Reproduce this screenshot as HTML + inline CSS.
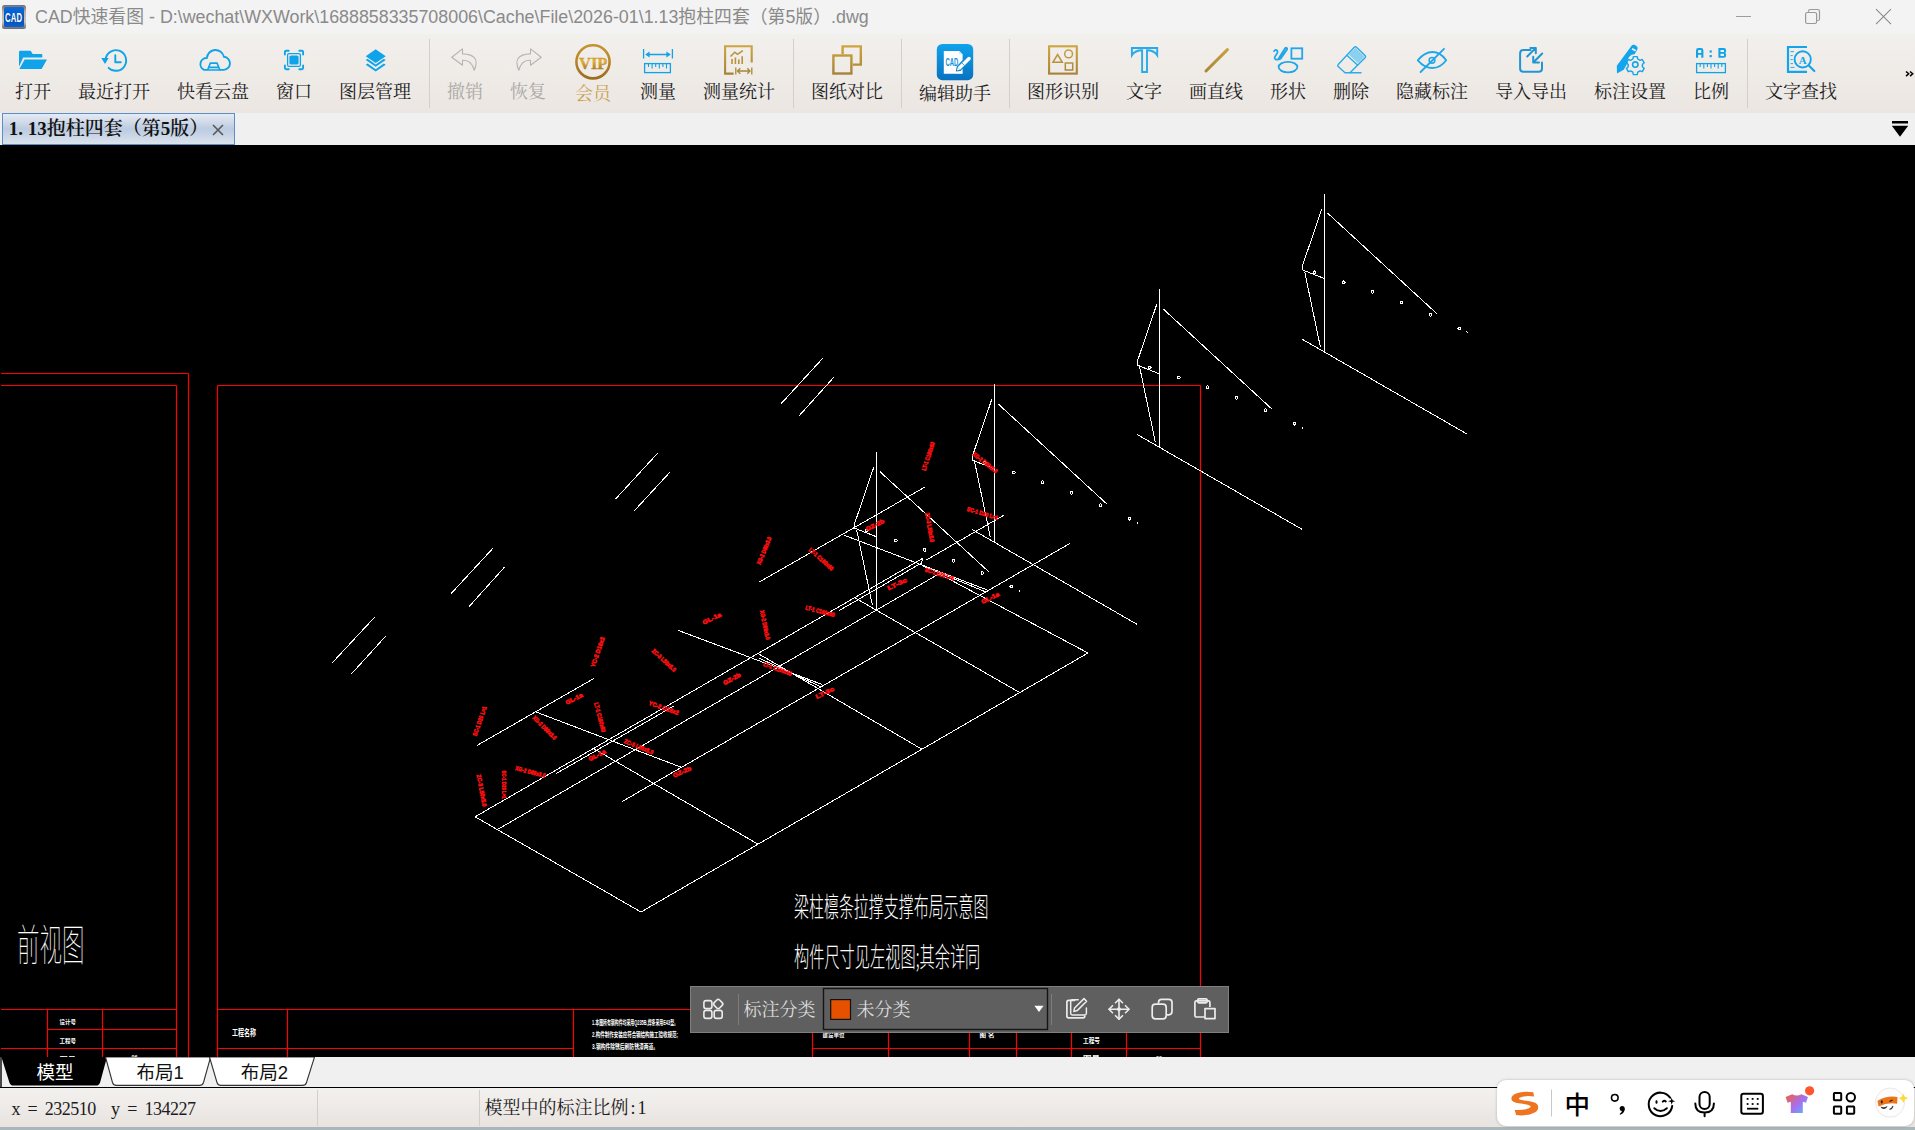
<!DOCTYPE html>
<html lang="zh-CN">
<head>
<meta charset="utf-8">
<title>CAD快速看图</title>
<style>
*{box-sizing:border-box;margin:0;padding:0}
html,body{width:1915px;height:1130px;overflow:hidden;background:#000}
body{position:relative;font-family:"Liberation Sans","Noto Sans CJK SC",sans-serif}
.abs{position:absolute}
#title{left:0;top:0;width:1915px;height:34px;background:#f3f3f3}
#title .txt{left:35px;top:1.200px;height:33px;line-height:33px;font-size:17.850px;color:#8a8a8a;white-space:nowrap;letter-spacing:0}
#appicon{left:2px;top:5px;width:24px;height:24px;border-radius:2.500px;background:linear-gradient(#6f6f6f,#b9b4ae 30%,#c9c4be 70%,#6b6865);}
#appicon:before{content:"";position:absolute;left:2px;top:1.600px;right:2px;bottom:1.800px;border-radius:1.500px;background:linear-gradient(#0a6ce0,#0650b4 60%,#0a5fd0)}
#appicon span{position:absolute;left:3.400px;top:6.500px;font:700 12.500px/12px "Liberation Sans",sans-serif;color:#fff;transform:scaleX(.62);transform-origin:0 0;letter-spacing:.3px}
#toolbar{left:0;top:34px;width:1915px;height:79px;background:linear-gradient(#f2f0ed,#efebe7 50%,#ebe6e2)}
.lb{position:absolute;transform:translateX(-50%);top:46px;font-family:"Liberation Serif","Noto Serif CJK SC",serif;font-size:18px;line-height:24px;color:#1c1c1c;font-weight:400;white-space:nowrap}
.lb.low{top:48px}
.lb.gray{color:#aaa8a6}
.lb.gold{color:#c9a050}
.sep{position:absolute;top:5px;width:1px;height:68px;background:#d8d4d0}
#tabs{left:0;top:113px;width:1915px;height:32px;background:#f0f0f0}
#doc-tab{left:2px;top:0;width:233px;height:32px;border:1px solid #5b8fc7;background:linear-gradient(#e6ebf4,#bccbe0 50%,#dbe3ee)}
#doc-tab .t{left:5.800px;top:3px;font-family:"Liberation Serif","Noto Serif CJK SC",serif;font-weight:600;font-size:19px;line-height:24px;color:#111;white-space:nowrap}
#canvas{left:0;top:145px;width:1915px;height:912px;background:#000;overflow:hidden}
#ltabs{left:0;top:1057px;width:1915px;height:31px;background:#f0f0f0;border-bottom:1.400px solid #000}
#status{left:0;top:1088px;width:1915px;height:39px;background:linear-gradient(#f3f1ef,#e8e3df)}
#status .s{font-family:"Liberation Serif","Noto Serif CJK SC",serif;color:#1c1c1c;line-height:24px;white-space:nowrap}
.cadt{position:absolute;transform-origin:0 0;white-space:nowrap;color:#fff;font-family:"Noto Sans CJK SC",sans-serif;font-weight:300;line-height:1}
#ftb{left:690px;top:841px;width:539px;height:47px;background:#5f5f5f;border:1px solid #808080}
#ftb svg{left:-1px !important;top:-1px !important}
.ft{font-family:"Liberation Serif","Noto Serif CJK SC",serif;font-size:18px;line-height:24px;color:#dcdcdc;white-space:nowrap}
.lt{top:4px;font-size:18.500px;line-height:24px;color:#111;white-space:nowrap;font-family:"Liberation Sans","Noto Sans CJK SC",sans-serif}
#ime{left:1496.500px;top:1080px;width:417.500px;height:46px;background:#fff;border-radius:9px;box-shadow:0 0 3px rgba(0,0,0,.25)}
#botstrip{left:0;top:1127px;width:1915px;height:3px;background:#a9b7bd}
</style>
</head>
<body>
<div id="title" class="abs">
  <div class="abs" id="appicon"><span>CAD</span></div>
  <div class="txt abs">CAD快速看图 - D:\wechat\WXWork\1688858335708006\Cache\File\2026-01\1.13抱柱四套（第5版）.dwg</div>
  <svg class="abs" style="left:1720px;top:0" width="195" height="33" viewBox="1720 0 195 33" fill="none">
  <path d="M1736 16.500H1751" stroke="#9c9c9c" stroke-width="1"/>
  <path d="M1808.500 11.800V11.300q0-1.800 1.800-1.800H1817.700q1.800 0 1.800 1.800V18.700q0 1.800-1.800 1.800H1817.300" stroke="#999" stroke-width="1.200"/>
  <rect x="1805.600" y="12.500" width="11" height="11" rx="1.800" stroke="#999" stroke-width="1.200"/>
  <path d="M1876 9.200L1891 24.200M1891 9.200L1876 24.200" stroke="#8a8a8a" stroke-width="1.100"/>
  </svg>
</div>
<div id="toolbar" class="abs">
<svg class="abs" style="left:0;top:-34px" width="1915" height="113" viewBox="0 0 1915 113" fill="none">
<defs>
<linearGradient id="gold" x1="0" y1="45" x2="0" y2="75" gradientUnits="userSpaceOnUse"><stop offset="0" stop-color="#cfa63f"/><stop offset="1" stop-color="#a5813a"/></linearGradient>
<linearGradient id="vipg" x1="0" y1="44" x2="0" y2="80" gradientUnits="userSpaceOnUse"><stop offset="0" stop-color="#c4942f"/><stop offset=".5" stop-color="#b5852a"/><stop offset="1" stop-color="#9a6a1e"/></linearGradient>
<linearGradient id="vipt" x1="0" y1="52" x2="0" y2="72" gradientUnits="userSpaceOnUse"><stop offset="0" stop-color="#a8741a"/><stop offset=".45" stop-color="#e0b13c"/><stop offset="1" stop-color="#9a6a1e"/></linearGradient>
<linearGradient id="edg" x1="0" y1="44" x2="0" y2="80" gradientUnits="userSpaceOnUse"><stop offset="0" stop-color="#10a3ea"/><stop offset="1" stop-color="#0872c2"/></linearGradient>
<pattern id="dots" width="1.6" height="1.6" patternUnits="userSpaceOnUse" patternTransform="rotate(45)"><rect width="1.600" height="1.600" fill="#5dbdec"/><rect x=".3" y=".3" width=".9" height=".9" fill="#eef6fb"/></pattern>
</defs>
<!-- separators -->
<g stroke="#d3cfcc" stroke-width="1">
<path d="M429.5 39V108M793.5 39V108M901.5 39V108M1009.5 39V108M1747.5 39V108"/>
</g>
<!-- open -->
<g fill="#0fa4ea">
<path d="M19 52q0-1.3 1.3-1.3h10.4l2 3.3h8.6q1 0 1 1v2.6H23.2L19 66.8z"/>
<path d="M24.6 59.4H47L41.6 69H19.4z"/>
</g>
<!-- recent -->
<g stroke="#0fa4ea" stroke-width="1.9" stroke-linecap="round">
<path d="M105.6 59.5A10.3 10.3 0 1 1 108.6 67.8"/>
<path d="M115.3 55.3V62.2H120.8" stroke-linejoin="round"/>
</g>
<path d="M101.3 58h7.4l-3.7 6z" fill="#0fa4ea"/>
<!-- cloud -->
<g stroke="#0fa4ea" stroke-width="1.9" stroke-linecap="round" stroke-linejoin="round">
<path d="M206.6 69.9H204.2A6.2 6.2 0 0 1 206.9 58A8.600 8.600 0 0 1 223.900 56.800A6.500 6.500 0 0 1 222.900 69.900H220.700"/>
<path d="M207.600 70l2.700-6.900h6.800l2.700 6.900zM208.600 67.400h10.400" stroke-width="1.600"/>
</g>
<!-- window -->
<g stroke="#0fa4ea" stroke-width="1.9" stroke-linecap="round" stroke-linejoin="round">
<path d="M284.9 54.5V52q0-1.2 1.2-1.2h2.6M299.3 50.8h2.6q1.2 0 1.2 1.2v2.5M303.1 65.5V68q0 1.2-1.2 1.2h-2.6M288.7 69.2h-2.6q-1.2 0-1.2-1.2v-2.5"/>
<rect x="287.6" y="53.6" width="12.8" height="12.8" rx="1.5" stroke-width="1.3"/>
</g>
<rect x="289.4" y="55.4" width="9.2" height="9.2" rx="1.6" fill="#0fa4ea"/>
<!-- layers -->
<g fill="#0fa4ea">
<path d="M375.700 49.300l10 6.900l-10 6.900l-10-6.900z"/>
<path d="M365.700 59.900L367.600 58.800L375.700 64.400L383.800 58.800L385.700 59.900L375.700 66.800Z"/>
<path d="M365.700 64.700L367.600 63.600L375.700 69.200L383.800 63.600L385.700 64.700L375.700 71.600Z"/>
</g>
<!-- undo / redo -->
<g stroke="#b4b4b4" stroke-width="1.1" stroke-linejoin="round">
<path d="M462.5 48.9L451.8 57.3L462.5 65.2V60.3Q471.5 59.6 474.2 70.3Q481.3 54.4 462.5 53.9Z"/>
<path d="M530.5 48.9L541.2 57.3L530.5 65.2V60.3Q521.5 59.6 518.8 70.3Q511.7 54.4 530.5 53.9Z"/>
</g>
<!-- vip -->
<circle cx="593" cy="61.8" r="16.6" stroke="url(#vipg)" stroke-width="2.6"/>
<text x="593.200" y="69.300" text-anchor="middle" font-family="'Liberation Serif',serif" font-weight="700" font-size="17" fill="url(#vipt)" stroke="url(#vipt)" stroke-width=".4" textLength="28.500" lengthAdjust="spacingAndGlyphs">VIP</text>
<!-- measure -->
<g stroke="#0fa4ea" stroke-width="1.3">
<path d="M643.6 49V58.6M672.4 49V58.6M647 54.5H669"/>
<rect x="644.6" y="63.6" width="25.8" height="9" />
<path d="M648.5 64V67M652.1 64V68.4M655.7 64V67M659.3 64V68.4M662.9 64V67M666.5 64V68.4" stroke-width="1.1"/>
</g>
<path d="M645.2 54.5l4.4-3v6zM670.8 54.5l-4.4-3v6z" fill="#0fa4ea"/>
<!-- measure stats -->
<g stroke="url(#gold)" stroke-width="2.1">
<path d="M733.6 73.6H725.1V46.3H751.7V62.5"/>
</g>
<g stroke="#b89238" stroke-width="1.4">
<path d="M732 64V59M735.4 64V57.5M738.8 64V59.5M742.2 64V56.2" stroke-width="1.6"/>
<path d="M730.5 56.5L734.8 52.2L737.5 54.4L742.8 50.6" stroke-width="1.5"/>
<path d="M735.8 67.5V74.6M751.8 67.5V74.6M737.5 71H750M740.3 68.2L737.5 71L740.3 73.8M747.3 68.2L750 71L747.3 73.8" stroke-width="1.3" stroke="#a98738"/>
</g>
<!-- compare -->
<g stroke="url(#gold)" stroke-width="2.4">
<path d="M842.6 54.3V46.4H860.8V64.6H852.8"/>
<rect x="833.4" y="55.5" width="18" height="18"/>
</g>
<!-- edit assistant -->
<rect x="936.8" y="44" width="36.4" height="36.2" rx="5.5" fill="url(#edg)"/>
<path d="M943.8 51H959.3L962.6 54.3V60L956.7 66.6L955.8 71.6L960.6 70.9L962.6 68.8V73.7H943.8Z" fill="#fff"/>
<path d="M959.3 51v3.3h3.3z" fill="#bfe3f7"/>
<text x="951.800" y="66.200" text-anchor="middle" font-family="'Liberation Sans',sans-serif" font-weight="700" font-size="10" fill="#1290dd" textLength="12.800" lengthAdjust="spacingAndGlyphs">CAD</text>
<path d="M957.7 67.3L967.8 57.3a1.7 1.7 0 0 1 2.5 2.5L960.2 69.8Z" fill="#fff"/>
<path d="M956.9 70.6l.9-3.1l2.2 2.2z" fill="#fff"/>
<path d="M955.8 72.8h6.5" stroke="#fff" stroke-width="1"/>
<path d="M962 63l2.5 2.5" stroke="#2aa0e4" stroke-width=".9"/>
<!-- shape recog -->
<g stroke="url(#gold)">
<rect x="1049.1" y="46.3" width="27.7" height="27.3" stroke-width="2.1"/>
<circle cx="1068.6" cy="53.9" r="3.9" stroke-width="1.5"/>
<path d="M1057.6 54.5L1062.3 62.3H1052.9Z" stroke-width="1.5"/>
<rect x="1065.3" y="63" width="7.4" height="7" stroke-width="1.5"/>
</g>
<!-- text T -->
<path d="M1131.900 48H1157.200V55.300Q1154 50.300 1147 50.300V72H1142.100V50.300Q1135.100 50.300 1131.900 55.300Z" stroke="#29abe9" stroke-width="1.900"/>
<!-- line -->
<path d="M1206 71L1227.4 49.6" stroke="url(#gold)" stroke-width="3" stroke-linecap="round"/>
<!-- shapes -->
<g stroke="#1ea7ea" stroke-width="1.8">
<rect x="1291.4" y="48.3" width="10.8" height="10.4"/>
<ellipse cx="1288" cy="67.1" rx="9.4" ry="5.3"/>
<path d="M1274 51.2q1.8-2.4 3.3-.4q1 1.700-1.500 4.500q-2.400 3.400.200 4.300q1.700.4 3.500-1.300" stroke-width="1.700" stroke-linecap="round"/>
<path d="M1279.300 57.400L1278.700 59.400L1280.600 58.600L1287 49.400a1.100 1.100 0 0 0-1.700-1.300Z" stroke-width="1.900" stroke-linejoin="round"/>
</g>
<!-- eraser -->
<g stroke="#29abe9" stroke-width="1.4" stroke-linejoin="round">
<path d="M1354.300 47.300a1.500 1.500 0 0 1 2.200 0l8.600 8.200a1.500 1.500 0 0 1 0 2.200L1350 72.800H1345l-6.800-6.200a1.500 1.500 0 0 1 0-2.200Z"/>
<path d="M1346.600 55.100L1358 65.500M1350 72.800H1361.500"/>
</g>
<path d="M1355.400 47.800l9.200 8.800l-6.400 6.600l-9.500-8.800z" fill="url(#dots)"/>
<!-- eye slash -->
<g stroke="#1ea7ea" stroke-width="1.8" stroke-linecap="round">
<path d="M1417.800 60.300Q1424.500 52 1432.500 52Q1440.500 52 1446.200 60.300Q1440.500 68 1432.500 68Q1424.500 68 1417.800 60.300Z" stroke-linejoin="round"/>
<circle cx="1432" cy="60.300" r="2.900" stroke-width="1.500"/>
<path d="M1420.600 72L1444 48.800"/>
</g>
<!-- import export -->
<g stroke="#2196d4" stroke-width="2" stroke-linecap="round" stroke-linejoin="round">
<path d="M1530.500 50H1523.500q-3.400 0-3.400 3.400V68.400q0 3.400 3.400 3.400H1538.600q3.400 0 3.400-3.400V62.500"/>
<path d="M1527.200 56.500L1535.800 47.900M1530.400 47.900H1535.800V53.300" stroke-width="2"/>
<path d="M1542.200 53.500L1533.200 62.500M1533.200 56.700V62.500H1539" stroke-width="2"/>
</g>
<!-- mark settings -->
<g fill="#12a4ec">
<path d="M1631 46.400a3.300 3.300 0 0 1 4.800-1a3.300 3.300 0 0 1 1.200 4.600l-2.300 4.300q-3-.2-5.500 2.400q-2.400 2.800-1.500 6l-4 7l-6.700 3.800l-.2-7.800Zm1.600 1.500l-1 1.700l3.600 2l.9-1.700z" fill-rule="evenodd"/>
</g>
<g stroke="#12a4ec" fill="none">
<circle cx="1635.300" cy="64.600" r="2.700" stroke-width="1.600"/>
<path d="M1633.400 56.600h3.800l.6 2.400l2.200 1.300l2.300-.8l1.900 3.300l-1.800 1.700v2.200l1.800 1.700l-1.900 3.300l-2.300-.8l-2.200 1.300l-.6 2.400h-3.800l-.6-2.400l-2.200-1.300l-2.300.8l-1.900-3.300l1.800-1.700v-2.200l-1.800-1.700l1.900-3.300l2.300.8l2.200-1.300z" stroke-width="1.400" stroke-linejoin="round"/>
</g>
<!-- scale -->
<g fill="#0fa4ea">
<path d="M1696 57.800V50.400q0-2.400 2.400-2.400h2.600q2.400 0 2.400 2.400v7.400h-2.100v-3h-3.200v3zm2.100-4.900h3.200v-2.100q0-.8-.8-.8h-1.600q-.8 0-.8.800z"/>
<rect x="1709.600" y="50.400" width="2.200" height="2.200"/><rect x="1709.600" y="55" width="2.200" height="2.200"/>
<path d="M1718.400 48h5.400q2.300 0 2.300 2.300v1q0 1.300-1 1.600q1 .3 1 1.600v1q0 2.300-2.300 2.300h-5.400zm2.100 1.900v2.100h3q.6 0 .6-.6v-.9q0-.6-.6-.6zm0 3.900v2.100h3q.6 0 .6-.6v-.9q0-.6-.6-.6z"/>
</g>
<g stroke="#0fa4ea" stroke-width="1.300">
<rect x="1696.600" y="63.600" width="28.800" height="9"/>
<path d="M1700.200 64V67M1703.800 64V68.400M1707.400 64V67M1711 64V68.400M1714.600 64V67M1718.200 64V68.400M1721.800 64V67" stroke-width="1.100"/>
</g>
<!-- text find -->
<g stroke="#12a4ec" stroke-linecap="butt">
<path d="M1807 47H1788V71.800H1807" stroke-width="2.200"/>
<path d="M1790.500 51.600H1794M1790.500 55.600H1792.800M1790.500 59.600H1792.800M1790.500 63.600H1793M1790.500 67.400H1794.500" stroke-width=".9"/>
<circle cx="1802.700" cy="59.400" r="8.100" stroke-width="1.900"/>
<path d="M1808.800 65.500L1814.300 71" stroke-width="2.200" stroke-linecap="round"/>
</g>
<text x="1802.700" y="64.300" text-anchor="middle" font-family="'Liberation Serif',serif" font-weight="700" font-size="11" fill="#12a4ec">A</text>
<!-- chevrons -->
<path d="M1906 71.500l2.700 2.300l-2.700 2.300M1910 71.500l2.700 2.300l-2.700 2.300" stroke="#000" stroke-width="1.500" fill="none"/>
</svg>
<div class="lb " style="left:33px">打开</div>
<div class="lb " style="left:114px">最近打开</div>
<div class="lb " style="left:213px">快看云盘</div>
<div class="lb " style="left:294px">窗口</div>
<div class="lb " style="left:375px">图层管理</div>
<div class="lb gray" style="left:465px">撤销</div>
<div class="lb gray" style="left:528px">恢复</div>
<div class="lb gold low" style="left:593px">会员</div>
<div class="lb " style="left:658px">测量</div>
<div class="lb " style="left:739px">测量统计</div>
<div class="lb " style="left:847px">图纸对比</div>
<div class="lb low" style="left:955px">编辑助手</div>
<div class="lb " style="left:1063px">图形识别</div>
<div class="lb " style="left:1144px">文字</div>
<div class="lb " style="left:1216px">画直线</div>
<div class="lb " style="left:1288px">形状</div>
<div class="lb " style="left:1351px">删除</div>
<div class="lb " style="left:1432px">隐藏标注</div>
<div class="lb " style="left:1531px">导入导出</div>
<div class="lb " style="left:1630px">标注设置</div>
<div class="lb " style="left:1711px">比例</div>
<div class="lb " style="left:1801px">文字查找</div>

</div>
<div id="tabs" class="abs">
  <svg class="abs" style="left:1888px;top:6px" width="24" height="20" viewBox="1888 119 24 20"><path d="M1892 121H1908V123.400H1892ZM1891.800 125.800H1908.200L1900 136.800Z" fill="#000"/></svg>
  <div id="doc-tab" class="abs"><div class="t abs" id="dtt">1<span style="display:inline-block;width:9.5px">.</span>13抱柱四套（第5版）</div><svg class="abs" style="left:209.300px;top:9.800px" width="12" height="12" viewBox="0 0 12 12"><path d="M1 1L11 11M11 1L1 11" stroke="#555" stroke-width="1.5"/></svg></div>
</div>
<div id="canvas" class="abs">
<svg class="abs" style="left:0;top:-145px" width="1915" height="1202" viewBox="0 0 1915 1202" fill="none" shape-rendering="auto">
<path stroke="#ff0000" stroke-width="1.2" d="M1 373.5L188.5 373.5M188.5 373.5L188.5 1057M1 385.5L176.5 385.5M176.5 385.5L176.5 1057M1 1009.5L176.5 1009.5M47.5 1029.5L176.5 1029.5M1 1048.5L176.5 1048.5M47.5 1009.5L47.5 1057M102.5 1009.5L102.5 1057M217.5 385.5L1200.5 385.5M217.5 385.5L217.5 1057M1200.5 385.5L1200.5 1057M217.5 1009.5L1200.5 1009.5M287.5 1009.5L287.5 1057M573.5 1009.5L573.5 1057M217.5 1048.5L573.5 1048.5M812.5 1048.5L1200.5 1048.5M812.5 1009.5L812.5 1057M888.5 1009.5L888.5 1057M969.5 1009.5L969.5 1057M1016.5 1009.5L1016.5 1057M1071.5 1009.5L1071.5 1057M1126.5 1009.5L1126.5 1057"/>
<path stroke="#fff" stroke-width="1" shape-rendering="crispEdges" d="M475.1 816.8L923.0 558.2M926.4 560.0L1004.0 515.1M921.5 563.0L923.0 558.2M498.5 828.9L939.1 573.8M621.8 801.7L1070.0 543.4M641.0 912.0L1088.0 653.0M475.1 816.8L641.0 912.0M593.6 748.5L757.5 843.9M758.7 653.9L922.0 749.3M939.1 573.8L1088.0 653.0M556.0 773.6L673.5 706.2M838.9 610.7L921.5 563.0M477.2 745.3L593.9 678.5M535.7 711.9L681.4 767.3M678.3 630.4L821.9 684.4M759.5 658.3L820.5 686.6M843.6 535.0L986.7 589.8M922.5 565.8L986.0 592.0M759.1 582.1L924.7 487.2M332.2 662.8L374.9 616.9M351.3 674.1L385.9 635.9M450.9 593.8L493.0 548.2M469.0 606.7L504.7 566.9M615.8 498.8L657.9 452.9M634.0 511.1L669.9 472.2M781.0 403.8L822.9 358.1M798.9 416.0L834.0 377.1M1324.5 194.0L1324.5 351.3M1321.8 209.0L1302.2 266.5M1302.2 266.5L1302.2 269.8M1302.2 269.8L1324.5 278.6M1304.7 271.9L1320.4 347.1M1327.7 213.2L1437.3 314.1M1302.2 339.2L1467.0 434.0M1159.5 289.3L1159.5 446.6M1156.8 304.3L1137.2 361.8M1137.2 361.8L1137.2 365.1M1137.2 365.1L1159.5 373.9M1139.7 367.2L1155.4 442.4M1162.7 308.5L1272.3 409.4M1137.2 434.5L1302.0 529.3M994.5 384.3L994.5 541.6M991.8 399.3L972.2 456.8M972.2 456.8L972.2 460.1M972.2 460.1L994.5 468.9M974.7 462.2L990.4 537.4M997.7 403.5L1107.3 504.4M972.2 529.5L1137.0 624.3M876.5 452.2L876.5 609.5M873.8 467.2L854.2 524.7M854.2 524.7L854.2 528.0M854.2 528.0L876.5 536.8M856.7 530.1L872.4 605.3M879.7 471.4L989.3 572.3M854.2 597.4L1019.0 692.2"/>
<g stroke="#fff" stroke-width="1.1" shape-rendering="crispEdges"><circle cx="1314.7" cy="272.3" r="1.3"/><circle cx="1343.8" cy="282.2" r="1.3"/><circle cx="1372.6" cy="291.8" r="1.3"/><circle cx="1401.4" cy="302.6" r="1.3"/><circle cx="1430.4" cy="314.8" r="1.3"/><circle cx="1459.3" cy="328.5" r="1.3"/><circle cx="1149.7" cy="367.6" r="1.3"/><circle cx="1178.8" cy="377.5" r="1.3"/><circle cx="1207.6" cy="387.1" r="1.3"/><circle cx="1236.4" cy="397.9" r="1.3"/><circle cx="1265.4" cy="410.1" r="1.3"/><circle cx="1294.3" cy="423.8" r="1.3"/><circle cx="984.7" cy="462.6" r="1.3"/><circle cx="1013.8" cy="472.5" r="1.3"/><circle cx="1042.6" cy="482.1" r="1.3"/><circle cx="1071.4" cy="492.9" r="1.3"/><circle cx="1100.4" cy="505.1" r="1.3"/><circle cx="1129.3" cy="518.8" r="1.3"/><circle cx="866.7" cy="530.5" r="1.3"/><circle cx="895.8" cy="540.4" r="1.3"/><circle cx="924.6" cy="550.0" r="1.3"/><circle cx="953.4" cy="560.8" r="1.3"/><circle cx="982.4" cy="573.0" r="1.3"/><circle cx="1011.3" cy="586.7" r="1.3"/></g>
<path stroke="#fff" stroke-width="1" shape-rendering="crispEdges" d="M1466.7 331.3l1 2M1301.7 426.6l1 2M1136.7 521.6l1 2M1018.7 589.5l1 2"/>
<g fill="#ff1010" font-family="'Liberation Sans',sans-serif" font-weight="700" font-size="6" stroke="#ff1010" stroke-width=".55">
<text transform="translate(923.5 470.3) rotate(-71.7)" y="2.1" textLength="29.7" lengthAdjust="spacingAndGlyphs">LT-1 C160x60</text>
<text transform="translate(973.3 453.4) rotate(38.1)" y="2.1" textLength="30.0" lengthAdjust="spacingAndGlyphs">XG-2 D89x3.0</text>
<text transform="translate(967.1 508.8) rotate(16.8)" y="2.1" textLength="32.2" lengthAdjust="spacingAndGlyphs">SC-1 D20 L=1</text>
<text transform="translate(927.1 512.9) rotate(80.1)" y="2.1" textLength="29.7" lengthAdjust="spacingAndGlyphs">ZC-3 L50x5.0</text>
<text transform="translate(866.0 529.4) rotate(-26.1)" y="2.1" textLength="20.0" lengthAdjust="spacingAndGlyphs">GZ-2b</text>
<text transform="translate(809.6 548.9) rotate(41.6)" y="2.1" textLength="30.9" lengthAdjust="spacingAndGlyphs">LT-1 C160x60</text>
<text transform="translate(758.3 564.2) rotate(-67.4)" y="2.1" textLength="29.5" lengthAdjust="spacingAndGlyphs">XG-2 D89x3.0</text>
<text transform="translate(925.1 569.4) rotate(17.5)" y="2.1" textLength="30.6" lengthAdjust="spacingAndGlyphs">SC-1 D20 L=1</text>
<text transform="translate(887.6 588.4) rotate(-24.9)" y="2.1" textLength="20.9" lengthAdjust="spacingAndGlyphs">LT-3c</text>
<text transform="translate(981.5 602.2) rotate(-26.4)" y="2.1" textLength="19.5" lengthAdjust="spacingAndGlyphs">GL-1a</text>
<text transform="translate(805.5 607.4) rotate(14.8)" y="2.1" textLength="30.2" lengthAdjust="spacingAndGlyphs">LT-1 C160x60</text>
<text transform="translate(761.9 610.4) rotate(78.2)" y="2.1" textLength="29.9" lengthAdjust="spacingAndGlyphs">XG-2 D89x3.0</text>
<text transform="translate(702.9 622.8) rotate(-26.2)" y="2.1" textLength="19.9" lengthAdjust="spacingAndGlyphs">GL-1a</text>
<text transform="translate(652.6 650.0) rotate(42.3)" y="2.1" textLength="30.4" lengthAdjust="spacingAndGlyphs">ZC-3 L50x5.0</text>
<text transform="translate(592.5 666.9) rotate(-70.9)" y="2.1" textLength="31.5" lengthAdjust="spacingAndGlyphs">YC-2 D16x2</text>
<text transform="translate(763.4 663.8) rotate(20.1)" y="2.1" textLength="30.0" lengthAdjust="spacingAndGlyphs">LT-1 C160x60</text>
<text transform="translate(723.4 683.3) rotate(-28.6)" y="2.1" textLength="19.2" lengthAdjust="spacingAndGlyphs">GZ-2b</text>
<text transform="translate(815.8 697.2) rotate(-26.2)" y="2.1" textLength="19.9" lengthAdjust="spacingAndGlyphs">LT-3c</text>
<text transform="translate(565.8 702.8) rotate(-26.4)" y="2.1" textLength="18.4" lengthAdjust="spacingAndGlyphs">GL-1a</text>
<text transform="translate(649.0 702.8) rotate(19.1)" y="2.1" textLength="31.4" lengthAdjust="spacingAndGlyphs">YC-2 D16x2</text>
<text transform="translate(596.1 702.8) rotate(75.3)" y="2.1" textLength="30.3" lengthAdjust="spacingAndGlyphs">LT-1 C160x60</text>
<text transform="translate(533.5 716.7) rotate(44.9)" y="2.1" textLength="31.2" lengthAdjust="spacingAndGlyphs">XG-2 D89x3.0</text>
<text transform="translate(474.5 735.7) rotate(-70.8)" y="2.1" textLength="31.0" lengthAdjust="spacingAndGlyphs">SC-1 D20 L=1</text>
<text transform="translate(624.3 740.8) rotate(22.3)" y="2.1" textLength="31.1" lengthAdjust="spacingAndGlyphs">ZC-3 L50x5.0</text>
<text transform="translate(588.9 759.3) rotate(-26.6)" y="2.1" textLength="18.3" lengthAdjust="spacingAndGlyphs">GL-1a</text>
<text transform="translate(673.1 775.7) rotate(-23.3)" y="2.1" textLength="19.5" lengthAdjust="spacingAndGlyphs">GZ-2b</text>
<text transform="translate(515.5 768.0) rotate(14.5)" y="2.1" textLength="30.8" lengthAdjust="spacingAndGlyphs">XG-2 D89x3.0</text>
<text transform="translate(503.7 770.6) rotate(90.0)" y="2.1" textLength="28.2" lengthAdjust="spacingAndGlyphs">SC-1 D20 L=1</text>
<text transform="translate(478.6 774.7) rotate(79.1)" y="2.1" textLength="32.4" lengthAdjust="spacingAndGlyphs">ZC-3 L50x5.0</text>
</g>
<g fill="#fff" font-family="'Liberation Sans','Noto Sans CJK SC',sans-serif" font-weight="700">
<text x="59.5" y="1024" font-size="6" textLength="16.5" lengthAdjust="spacingAndGlyphs">设计号</text>
<text x="59.5" y="1043" font-size="6" textLength="16.5" lengthAdjust="spacingAndGlyphs">工程号</text>
<text x="59.5" y="1060.5" font-size="6" textLength="16.5" lengthAdjust="spacingAndGlyphs">图号</text>
<text x="131.5" y="1059.3" font-size="5" textLength="6" lengthAdjust="spacingAndGlyphs">06</text>
<text x="232" y="1036.3" font-size="9" textLength="24" lengthAdjust="spacingAndGlyphs">工程名称</text>
<text x="592" y="1025" font-size="6.5" textLength="86" lengthAdjust="spacingAndGlyphs">1.本图所有钢构件均采用Q235B,焊条采用E43型。</text>
<text x="592" y="1037.3" font-size="6.5" textLength="86" lengthAdjust="spacingAndGlyphs">2.构件制作安装应符合钢结构施工验收规范;</text>
<text x="592" y="1049" font-size="6.5" textLength="66" lengthAdjust="spacingAndGlyphs">3.钢构件除锈后刷防锈漆两道。</text>
<text x="1083" y="1042.8" font-size="6.5" textLength="17" lengthAdjust="spacingAndGlyphs">工程号</text>
<text x="1083" y="1060.8" font-size="6.5" textLength="17" lengthAdjust="spacingAndGlyphs">图号</text>
<text x="1156" y="1059.6" font-size="5" textLength="6" lengthAdjust="spacingAndGlyphs">06</text>
<text x="822.5" y="1037" font-size="5.5" textLength="22" lengthAdjust="spacingAndGlyphs">建设单位</text>
<text x="979.5" y="1037" font-size="5.5" textLength="15" lengthAdjust="spacingAndGlyphs">图 名</text>
</g>
</svg>
<div class="cadt" style="left:793.5px;top:746.5px;font-size:27.5px;transform:scaleX(.544)">梁柱檩条拉撑支撑布局示意图</div>
<div class="cadt" style="left:793.5px;top:797px;font-size:27.5px;transform:scaleX(.553)">构件尺寸见左视图;其余详同</div>
<div class="cadt" style="left:17px;top:775.800px;font-size:43px;font-weight:100;transform:scaleX(.523)">前视图</div>
<div id="ftb" class="abs">
<svg class="abs" style="left:0;top:0" width="539" height="47" viewBox="690 986 539 47" fill="none">
<g stroke="#ececec" stroke-width="1.6">
<rect x="703.9" y="1000.6" width="8" height="8" rx="2.2"/>
<rect x="703.9" y="1010.4" width="8" height="8" rx="2.2"/>
<rect x="714.2" y="1010.4" width="8" height="8" rx="2.2"/>
<rect x="714.4" y="1000.2" width="7.6" height="7.6" rx="2" transform="rotate(45 718.2 1004)"/>
</g>
<path d="M738.5 994V1025M1051.500 994V1025" stroke="#7d7d7d" stroke-width="1"/>
<rect x="823.500" y="988.500" width="224" height="41" fill="#5f5f5f" stroke="#151515" stroke-width="1.400"/>
<rect x="830.700" y="999.600" width="19.800" height="19.800" fill="#e65100" stroke="#111" stroke-width="1.200"/>
<path d="M1034.400 1005.800h9.200l-4.600 6.300z" fill="#fff"/>
<!-- edit -->
<g stroke="#ececec" stroke-width="1.700" stroke-linejoin="round" stroke-linecap="round">
<path d="M1074.500 1000.300H1068.700q-1.800 0-1.800 1.800V1016q0 1.800 1.800 1.800H1083q1.800 0 1.800-1.800"/>
<path d="M1078.200 999.800H1072.300q-1.600 0-1.600 1.600V1013.300q0 1.600 1.600 1.600H1084.800q1.600 0 1.600-1.600V1008" stroke-width="1.500"/>
<path d="M1084 998.600l2.600 2.600l-9.400 9.400l-3.400.8l.8-3.400z" stroke-width="1.500"/>
</g>
<!-- move -->
<g stroke="#ececec" stroke-width="1.600" stroke-linecap="round" stroke-linejoin="round">
<path d="M1119 999.500V1019M1109.200 1009.200H1128.800"/>
<path d="M1115.500 1002.700L1119 999.200L1122.500 1002.700M1115.500 1015.700L1119 1019.200L1122.500 1015.700M1112.500 1005.700L1109 1009.200L1112.500 1012.700M1125.500 1005.700L1129 1009.200L1125.500 1012.700"/>
</g>
<circle cx="1119" cy="1009.200" r="2" fill="#ececec"/>
<!-- copy -->
<g stroke="#ececec" stroke-width="1.700">
<path d="M1158.500 1003.500V1002.500q0-3.200 3.200-3.200H1168.800q3.200 0 3.200 3.200V1011.600q0 3.200-3.200 3.200H1167"/>
<rect x="1152.200" y="1004.200" width="14" height="14.600" rx="3.200"/>
</g>
<!-- paste -->
<g stroke="#ececec" stroke-width="1.700" stroke-linejoin="round">
<path d="M1204.500 1017H1196.500q-1.600 0-1.600-1.600V1002.400q0-1.600 1.600-1.600H1208.300q1.600 0 1.600 1.600V1007"/>
<rect x="1197.700" y="998.800" width="9.400" height="4" rx="1.200"/>
<rect x="1205" y="1008.600" width="10" height="10" />
</g>
</svg>
<div class="abs ft" style="left:52.500px;top:11px">标注分类</div>
<div class="abs ft" style="left:165.500px;top:11px">未分类</div>
</div>

</div>
<div id="ltabs" class="abs">
<svg class="abs" style="left:0;top:0" width="330" height="31" viewBox="0 1057 330 31">
<path d="M1.400 1057L9.400 1082.500Q10.300 1085.600 13.500 1085.600H96Q99.200 1085.600 100.100 1082.500L107 1057Z" fill="#000"/>
<path d="M1 1057V1087" stroke="#000" stroke-width="1.400"/>
<path d="M105.500 1057L112.500 1082.500Q113.400 1085.400 116.500 1085.400H199.500Q202.600 1085.400 203.500 1082.500L210.600 1057Z" fill="#fff" stroke="#333" stroke-width="1.100"/>
<path d="M209.500 1057L217 1082.500Q217.900 1085.400 221 1085.400H302.500Q305.600 1085.400 306.500 1082.500L314.500 1057Z" fill="#fff" stroke="#333" stroke-width="1.100"/>
</svg>
<div class="abs lt" style="left:36.500px;color:#fff">模型</div>
<div class="abs lt" style="left:136.500px">布局1</div>
<div class="abs lt" style="left:240.800px">布局2</div>

</div>
<div id="status" class="abs">
  <div class="s abs" style="left:11.500px;top:9px;font-size:18px;letter-spacing:-.5px;word-spacing:3.600px;white-space:pre">x = 232510  y = 134227</div>
  <div class="s abs" style="left:484.500px;top:8px;font-size:18px">模型中的标注比例<span style="display:inline-block;width:9px;text-align:center">:</span>1</div>
  <div class="abs" style="left:317px;top:2px;width:1px;height:36px;background:#d2ceca"></div>
  <div class="abs" style="left:479px;top:2px;width:1px;height:36px;background:#d2ceca"></div>
</div>
<div id="botstrip" class="abs"></div>
<div id="ime" class="abs">
<svg class="abs" style="left:0;top:0" width="419" height="46" viewBox="1496 1080 419 46" fill="none">
<!-- S logo -->
<path d="M1532.300 1092.300q-9.500-1.500-17.200 1.200q-5.400 2.200-4.600 6q.6 2.800 7.200 3.800q8.800 1 11.400 2.400q1.600 1.200-1.200 2.600q-5.500 2.400-14.200 1.600l1.400 5.200q11.600 1.200 18.600-2.600q4.600-2.800 3.200-7q-1.200-3.200-8.400-4.200q-9.500-1-10.500-2.200q-.8-1.200 2.600-2.200q5.200-1.400 12.500-.4z" fill="#ef7420"/>
<path d="M1550.500 1089.500V1116.500" stroke="#c8c8c8" stroke-width="1"/>
<!-- punctuation -->
<circle cx="1613.800" cy="1097.800" r="3.300" stroke="#000" stroke-width="1.600"/>
<circle cx="1621.200" cy="1108.400" r="2.500" fill="#000"/><path d="M1623.700 1108.400q.3 4.200-4.600 6.400l-.5-.9q2.800-1.600 2.400-4z" fill="#000"/>
<!-- smiley -->
<g stroke="#000" stroke-width="2" stroke-linecap="round">
<path d="M1669.200 1097.700A11.800 11.800 0 1 0 1671.200 1106"/>
<path d="M1653.300 1108.200q6.200 5.600 12.600 0" stroke-width="1.900"/>
<path d="M1655.500 1101.300v1.400M1661.800 1101.600q1.500-1.500 3-.2" stroke-width="2"/>
</g>
<path d="M1670.700 1097.700l.9 2.600l2.600.9l-2.600.9l-.9 2.600l-.9-2.600l-2.600-.9l2.600-.9z" fill="#000"/>
<!-- mic -->
<g stroke="#000" stroke-width="2" stroke-linecap="round">
<rect x="1698.500" y="1092" width="10.200" height="17" rx="5.100"/>
<path d="M1694.300 1103.600q0 9 9.300 9q9.300 0 9.300-9M1703.600 1112.700v3.600"/>
</g>
<!-- keyboard -->
<g stroke="#000" stroke-width="2">
<rect x="1740.300" y="1093.800" width="21.600" height="19.900" rx="2.200"/>
<path d="M1746 1108.700h11.300" stroke-width="1.800"/>
</g>
<g fill="#000"><rect x="1745.700" y="1098" width="1.800" height="1.800"/><rect x="1750.700" y="1098" width="1.800" height="1.800"/><rect x="1755.800" y="1098" width="1.800" height="1.800"/><rect x="1745.700" y="1103.100" width="1.800" height="1.800"/><rect x="1750.700" y="1103.100" width="1.800" height="1.800"/><rect x="1755.800" y="1103.100" width="1.800" height="1.800"/></g>
<!-- tshirt -->
<defs><linearGradient id="tsg" x1="1786" y1="1094" x2="1806" y2="1116" gradientUnits="userSpaceOnUse"><stop offset="0" stop-color="#f4603c"/><stop offset=".5" stop-color="#a470f2"/><stop offset="1" stop-color="#4cc4ff"/></linearGradient></defs>
<path d="M1791.200 1094.200q4.600 2.800 9.200 0l6.600 2.800l-2 5.800l-3.200-1v11.200h-12v-11.200l-3.200 1l-2-5.800z" fill="url(#tsg)"/>
<circle cx="1808.600" cy="1090.800" r="4.600" fill="#ff5530"/>
<!-- grid -->
<g stroke="#000" stroke-width="2">
<rect x="1832.900" y="1093" width="7.300" height="7.300" rx=".8"/><rect x="1832.900" y="1106.500" width="7.300" height="7.300" rx=".8"/><rect x="1845.900" y="1106.500" width="7.300" height="7.300" rx=".8"/>
<circle cx="1849.800" cy="1097.200" r="4.200"/>
</g>
<!-- avatar -->
<circle cx="1889" cy="1102.600" r="14.600" fill="#fdfdfd" stroke="#eee6e6" stroke-width="1"/>
<path d="M1876.500 1100.800q10-5.500 20-3.800l-.4 6.800q-9-1.600-18.600 2.600z" fill="#ee7418"/>
<ellipse cx="1880.800" cy="1101.800" rx="1" ry="1.600" fill="#222"/><path d="M1888.500 1101.500l3-1.500" stroke="#222" stroke-width="1.300"/>
<path d="M1879.500 1106.500q3.500 2 7-.8q-1 3.200-4 3.200q-2.400 0-3-2.400z" fill="#333"/><path d="M1888.500 1109.500q2.800-1 3.500-3.500" stroke="#333" stroke-width="1.200" fill="none"/>
<path d="M1902.300 1093.500l1.500 3.300l3.300 1.500l-3.300 1.500l-1.500 3.300l-1.500-3.300l-3.300-1.500l3.300-1.500z" fill="#f7dc3c"/>
</svg>
<div class="abs" style="left:68px;top:10.300px;font-size:25.500px;line-height:30px;font-weight:500;color:#000;font-family:'Liberation Sans','Noto Sans CJK SC',sans-serif">中</div>
</div>

</body>
</html>
